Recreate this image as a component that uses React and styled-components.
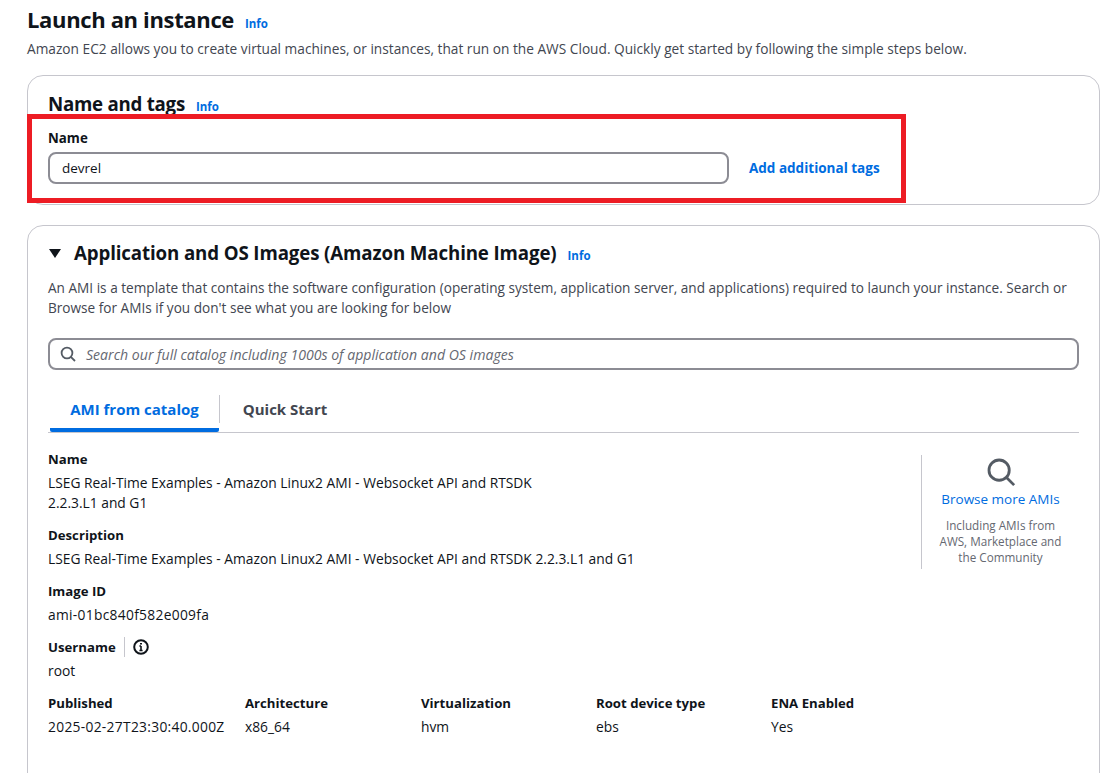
import styled, { createGlobalStyle } from "styled-components";

const GlobalStyle = createGlobalStyle`
  html, body {
    margin: 0;
    padding: 0;
    background: #fff;
    overflow: hidden;
  }
  body {
    font-family: "Open Sans", "Noto Sans", "Liberation Sans", sans-serif;
    color: #0f141a;
    font-size: 14px;
  }
`;

const Page = styled.div`
  width: 1114px;
  height: 773px;
  overflow: hidden;
  box-sizing: border-box;
  padding: 4px 14px 0 27px;
`;

const HeaderRow = styled.div`
  display: flex;
  align-items: baseline;
  gap: 11px;
`;

const PageTitle = styled.h1`
  margin: 0;
  font-size: 22px;
  line-height: 30px;
  font-weight: 700;
  letter-spacing: -0.35px;
`;

const InfoLink = styled.a`
  color: #006ce0;
  font-size: 11.5px;
  font-weight: 700;
`;

const PageIntro = styled.p`
  margin: 5px 0 16px;
  font-size: 13.7px;
  line-height: 20px;
  color: #424650;
`;

const Card = styled.section`
  position: relative;
  border: 1px solid #c6c6cd;
  border-radius: 16px;
  box-sizing: border-box;
  margin-bottom: 20px;
  padding: ${({ $open }) => ($open ? "14px 20px 60px" : "15px 20px 0")};
  height: ${({ $open }) => ($open ? "600px" : "130px")};
`;

const CardHeading = styled.div`
  display: flex;
  align-items: baseline;
  gap: 11px;
`;

const CardTitle = styled.h2`
  margin: 0;
  font-size: 18.7px;
  line-height: 26px;
  font-weight: 700;
  letter-spacing: ${({ $spacing }) => $spacing};
`;

const Caret = styled.span`
  width: 0;
  height: 0;
  border-left: 6.5px solid transparent;
  border-right: 6.5px solid transparent;
  border-top: 9px solid #0f141a;
  align-self: center;
  margin: 0 2px 0 1px;
`;

const NameLabel = styled.div`
  font-size: 13.3px;
  font-weight: 700;
  line-height: 20px;
  margin-top: 11px;
`;

const FieldRow = styled.div`
  display: flex;
  align-items: center;
  gap: 20px;
  margin-top: 4px;
`;

const TextField = styled.div`
  box-sizing: border-box;
  width: ${({ $width }) => $width};
  height: 32px;
  border: 2px solid #8c8c94;
  border-radius: 8px;
  display: flex;
  align-items: center;
  gap: 10px;
  padding: 0 ${({ $search }) => ($search ? "10px" : "12px")};
  font-size: 13.5px;
`;

const SearchText = styled.span`
  font-style: italic;
  font-size: 14.1px;
  color: #656871;
`;

const TagsLink = styled.a`
  color: #006ce0;
  font-size: 13.5px;
  font-weight: 700;
`;

const RedBox = styled.div`
  position: absolute;
  left: -1px;
  top: 38px;
  width: 879px;
  height: 89px;
  box-sizing: border-box;
  border: 5px solid #ed1c24;
`;

const Lead = styled.p`
  margin: 12px 0 20px;
  font-size: 13.62px;
  line-height: 20px;
  color: #424650;
`;

const TabBar = styled.div`
  display: flex;
  margin-top: 13px;
  height: 49px;
  border-bottom: 1px solid #c6c6cd;
  box-sizing: content-box;
`;

const Tab = styled.div`
  width: ${({ $width }) => $width};
  height: 49px;
  margin-left: ${({ $active }) => ($active ? "2px" : "0")};
  box-sizing: border-box;
  padding-top: 4px;
  text-align: center;
  line-height: 44px;
  font-size: 15px;
  font-weight: 700;
  color: ${({ $active }) => ($active ? "#006ce0" : "#424650")};
  border-bottom: ${({ $active }) => ($active ? "4px solid #006ce0" : "none")};
  border-radius: 2px;
`;

const TabDivider = styled.span`
  width: 1px;
  height: 28px;
  margin-top: 12px;
  background: #c6c6cd;
`;

const DetailArea = styled.div`
  display: flex;
  justify-content: space-between;
  margin-top: 16px;
`;

const DetailColumn = styled.div`
  width: 600px;
`;

const Detail = styled.div`
  margin-bottom: 12px;
`;

const DetailLabel = styled.div`
  display: flex;
  align-items: center;
  font-size: 13.2px;
  font-weight: 700;
  line-height: 20px;
  height: 20px;
  margin-bottom: 4px;
`;

const DetailValue = styled.div`
  font-size: 13.8px;
  line-height: 20px;
  white-space: nowrap;
  letter-spacing: ${({ $tracked }) => ($tracked ? "0.3px" : "0")};
`;

const BrowseBox = styled.div`
  box-sizing: border-box;
  width: 158px;
  height: 114px;
  margin-top: 6px;
  padding-top: 2px;
  border-left: 1px solid #c6c6cd;
  display: flex;
  flex-direction: column;
  align-items: center;
  text-align: center;
`;

const BrowseLink = styled.a`
  color: #006ce0;
  font-size: 13.5px;
  line-height: 20px;
  margin-top: 2px;
`;

const BrowseNote = styled.div`
  margin-top: 8px;
  font-size: 11.7px;
  line-height: 16px;
  color: #656871;
`;

const LabelDivider = styled.span`
  width: 1px;
  height: 20px;
  background: #c6c6cd;
  margin: 0 8px;
`;

const SpecGrid = styled.div`
  display: grid;
  grid-template-columns: 197px 176px 175px 175px 175px;
`;

const SearchIcon = ({ size, width }) => (
  <svg width={size} height={size} viewBox="0 0 16 16" fill="none" stroke="#545b64" strokeWidth={width}>
    <circle cx="7" cy="7" r="5.4" />
    <path d="M10.8 10.8L15 15" />
  </svg>
);

const InfoIcon = () => (
  <svg width="16" height="16" viewBox="0 0 16 16" fill="none" stroke="#0f141a" strokeWidth="2">
    <circle cx="8" cy="8" r="6.8" />
    <path d="M8 7v4.5M6.4 11.5h3.2M6.4 7H8" strokeWidth="1.6" />
    <path d="M8 4v1.6" />
  </svg>
);

const specs = [
  ["Published", "2025-02-27T23:30:40.000Z", true],
  ["Architecture", "x86_64"],
  ["Virtualization", "hvm"],
  ["Root device type", "ebs"],
  ["ENA Enabled", "Yes"],
];

export default function App() {
  return (
    <Page>
      <GlobalStyle />
      <HeaderRow>
        <PageTitle>Launch an instance</PageTitle>
        <InfoLink>Info</InfoLink>
      </HeaderRow>
      <PageIntro>
        Amazon EC2 allows you to create virtual machines, or instances, that run on the AWS Cloud. Quickly get started by following the simple steps below.
      </PageIntro>

      <Card>
        <CardHeading>
          <CardTitle $spacing="-0.25px">Name and tags</CardTitle>
          <InfoLink>Info</InfoLink>
        </CardHeading>
        <NameLabel>Name</NameLabel>
        <FieldRow>
          <TextField $width="681px">devrel</TextField>
          <TagsLink>Add additional tags</TagsLink>
        </FieldRow>
        <RedBox />
      </Card>

      <Card $open>
        <CardHeading>
          <Caret />
          <CardTitle $spacing="-0.12px">Application and OS Images (Amazon Machine Image)</CardTitle>
          <InfoLink>Info</InfoLink>
        </CardHeading>
        <Lead>
          An AMI is a template that contains the software configuration (operating system, application server, and applications) required to launch your instance. Search or Browse for AMIs if you don't see what you are looking for below
        </Lead>
        <TextField $search $width="1031px">
          <SearchIcon size={16} width={1.8} />
          <SearchText>Search our full catalog including 1000s of application and OS images</SearchText>
        </TextField>
        <TabBar>
          <Tab $active $width="169px">AMI from catalog</Tab>
          <TabDivider />
          <Tab $width="130px">Quick Start</Tab>
        </TabBar>
        <DetailArea>
          <DetailColumn>
            <Detail>
              <DetailLabel>Name</DetailLabel>
              <DetailValue>LSEG Real-Time Examples - Amazon Linux2 AMI - Websocket API and RTSDK</DetailValue>
              <DetailValue>2.2.3.L1 and G1</DetailValue>
            </Detail>
            <Detail>
              <DetailLabel>Description</DetailLabel>
              <DetailValue>LSEG Real-Time Examples - Amazon Linux2 AMI - Websocket API and RTSDK 2.2.3.L1 and G1</DetailValue>
            </Detail>
            <Detail>
              <DetailLabel>Image ID</DetailLabel>
              <DetailValue $tracked>ami-01bc840f582e009fa</DetailValue>
            </Detail>
            <Detail>
              <DetailLabel>
                Username
                <LabelDivider />
                <InfoIcon />
              </DetailLabel>
              <DetailValue>root</DetailValue>
            </Detail>
          </DetailColumn>
          <BrowseBox>
            <SearchIcon size={30} width={1.5} />
            <BrowseLink>Browse more AMIs</BrowseLink>
            <BrowseNote>
              Including AMIs from
              <br />
              AWS, Marketplace and
              <br />
              the Community
            </BrowseNote>
          </BrowseBox>
        </DetailArea>
        <SpecGrid>
          {specs.map(([label, value, tracked]) => (
            <div key={label}>
              <DetailLabel>{label}</DetailLabel>
              <DetailValue $tracked={tracked}>{value}</DetailValue>
            </div>
          ))}
        </SpecGrid>
      </Card>
    </Page>
  );
}
